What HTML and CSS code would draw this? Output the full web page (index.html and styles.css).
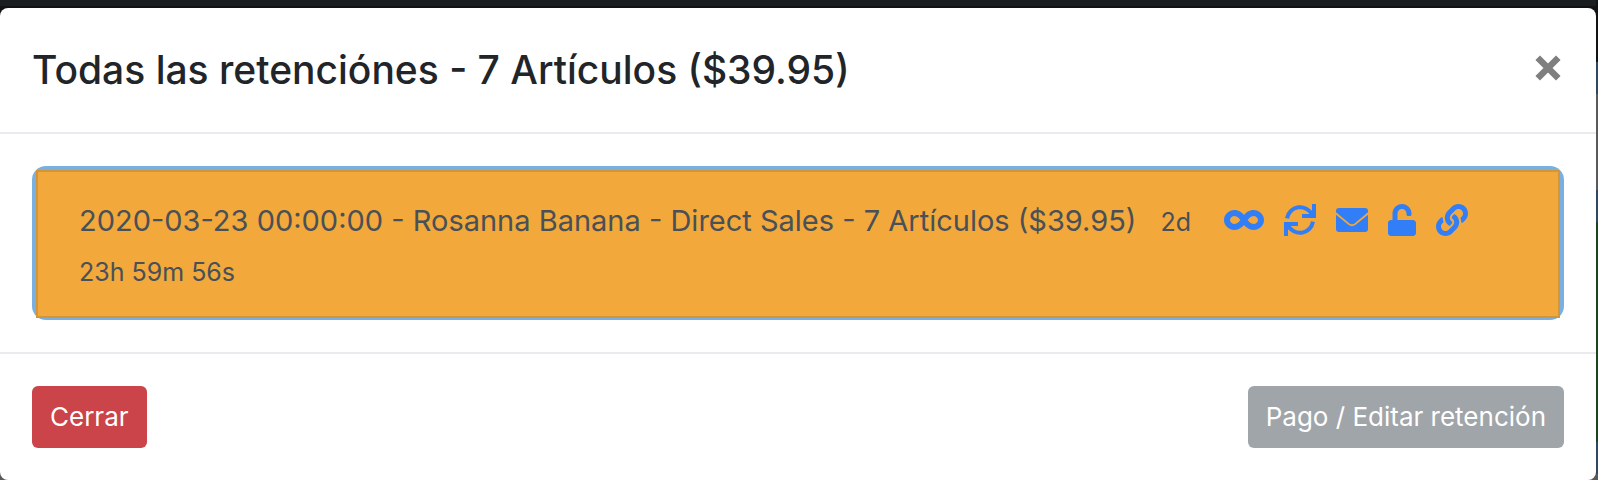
FILE: index.html
```html
<!DOCTYPE html>
<html lang="es">
<head>
<meta charset="utf-8">
<title>Todas las retenciónes</title>
<link rel="stylesheet" href="styles.css">
</head>
<body>
<main class="modal" role="dialog" aria-labelledby="modal-title">
  <header class="modal-header">
    <h1 class="modal-title" id="modal-title">Todas las retenciónes - 7 Artículos ($39.95)</h1>
    <button class="close" type="button" aria-label="Cerrar ventana">
      <svg class="close-icon" viewBox="0 0 24 24"><path d="M2.500 2.500l19 19M21.500 2.500l-19 19" fill="none" stroke="currentColor" stroke-width="6"/></svg>
    </button>
  </header>
  <section class="modal-body">
    <div class="hold-frame">
      <article class="hold">
        <div class="hold-text">2020-03-23 00:00:00 - Rosanna Banana - Direct Sales - 7 Artículos ($39.95) <small class="countdown">2d 23h 59m 56s</small></div>
        <nav class="actions" aria-label="Acciones">
          <a href="#" aria-label="Sin límite"><svg class="icon icon-wide" viewBox="0 0 640 512"><path d="M471.1 96C405 96 353.3 137.3 320 174.6 286.7 137.3 235 96 168.9 96 75.8 96 0 167.8 0 256s75.8 160 168.9 160c66.1 0 117.8-41.3 151.1-78.6 33.3 37.3 85 78.6 151.1 78.6 93.1 0 168.9-71.8 168.9-160S564.2 96 471.1 96zM168.9 320c-40.2 0-72.9-28.7-72.9-64s32.7-64 72.9-64c38.2 0 73.4 36.1 94 64-20.4 27.6-55.9 64-94 64zm302.2 0c-38.2 0-73.4-36.1-94-64 20.4-27.6 55.9-64 94-64 40.2 0 72.9 28.7 72.9 64s-32.7 64-72.9 64z"/></svg></a>
          <a href="#" aria-label="Renovar"><svg class="icon" viewBox="0 0 32 32"><path d="M3 14.3A13.3 13.3 0 0 1 28 10.500M30 0V12H18M29 17.7A13.3 13.3 0 0 1 4 21.500M2 32V20H14" fill="none" stroke="currentColor" stroke-width="4"/></svg></a>
          <a href="#" aria-label="Enviar correo"><svg class="icon" viewBox="0 0 32 32"><path d="M3 4H29A3 3 0 0 1 32 7V8.300L18.500 19.500Q16 21.200 13.500 19.500L0 8.300V7A3 3 0 0 1 3 4zM0 10.800L12.700 21.100Q16 23.300 19.300 21.100L32 10.800V25A3 3 0 0 1 29 28H3A3 3 0 0 1 0 25z"/></svg></a>
          <a href="#" aria-label="Desbloquear"><svg class="icon icon-narrow" viewBox="0 0 448 512"><path d="M400 256H152V152.900c0-39.600 31.700-72.500 71.300-72.900 40-.4 72.700 32.100 72.700 72v16c0 13.300 10.700 24 24 24h32c13.300 0 24-10.700 24-24v-16C376 68 307.500-.3 223.500 0 139.500.3 72 69.500 72 153.500V256H48c-26.500 0-48 21.500-48 48v160c0 26.500 21.500 48 48 48h352c26.500 0 48-21.500 48-48V304c0-26.500-21.500-48-48-48z"/></svg></a>
          <a href="#" aria-label="Enlace"><svg class="icon" viewBox="0 0 512 512"><path d="M326.612 185.391c59.747 59.809 58.927 155.698.36 214.590-.11.12-.24.25-.36.37l-67.200 67.200c-59.270 59.270-155.699 59.262-214.960 0-59.270-59.260-59.270-155.700 0-214.960l37.106-37.106c9.840-9.840 26.786-3.300 27.294 10.606.648 17.722 3.826 35.527 9.690 52.721 1.986 5.822.567 12.262-3.783 16.612l-13.087 13.087c-28.026 28.026-28.905 73.660-1.155 101.960 28.024 28.579 74.086 28.749 102.325.51l67.200-67.190c28.191-28.191 28.073-73.757 0-101.830-3.701-3.694-7.429-6.564-10.341-8.569a16.037 16.037 0 0 1-6.947-12.606c-.396-10.567 3.348-21.456 11.698-29.806l21.054-21.055c5.521-5.521 14.182-6.199 20.584-1.731a152.482 152.482 0 0 1 20.522 17.197zM467.547 44.449c-59.261-59.262-155.690-59.270-214.960 0l-67.200 67.200c-.12.12-.25.25-.36.37-58.566 58.892-59.387 154.781.36 214.590a152.454 152.454 0 0 0 20.521 17.196c6.402 4.468 15.064 3.789 20.584-1.731l21.054-21.055c8.350-8.350 12.094-19.239 11.698-29.806a16.037 16.037 0 0 0-6.947-12.606c-2.912-2.005-6.640-4.875-10.341-8.569-28.073-28.073-28.191-73.639 0-101.830l67.200-67.190c28.239-28.239 74.300-28.069 102.325.51 27.750 28.300 26.872 73.934-1.155 101.960l-13.087 13.087c-4.350 4.350-5.769 10.790-3.783 16.612 5.864 17.194 9.042 34.999 9.690 52.721.509 13.906 17.454 20.446 27.294 10.606l37.106-37.106c59.271-59.259 59.271-155.699.001-214.959z"/></svg></a>
        </nav>
      </article>
    </div>
  </section>
  <footer class="modal-footer">
    <button class="btn btn-danger" type="button">Cerrar</button>
    <button class="btn btn-muted" type="button">Pago / Editar retención</button>
  </footer>
</main>
</body>
</html>
```
FILE: styles.css
```css
* { box-sizing: border-box; }
body {
  margin: 0;
  padding: 8px 2px 0 0;
  min-height: 100vh;
  font-family: Inter, "Liberation Sans", sans-serif;
  color: #212529;
  background:
    linear-gradient(#101214 0 62px, #2d4860 62px 94px, #595959 94px 190px, #2d4860 190px 222px, #1b441f 222px 442px, #2d4860 442px 474px, #595959 474px) right 8px / 2px 100% no-repeat,
    linear-gradient(#1a1e21 0 6px, #101214 6px 62px, #595959 62px);
  background-position: right top, left top;
}
.modal { background: #fff; border-radius: 8px; }
.modal-header {
  display: flex;
  justify-content: space-between;
  align-items: flex-start;
  padding: 32px;
  border-bottom: 2px solid #e9ebef;
}
.modal-title { margin: 0; font-size: 39px; font-weight: 500; line-height: 60px; }
.close { display: flex; padding: 15px 3px; border: 0; background: none; color: #7f7f7f; }
.close-icon { width: 26px; height: 26px; }
.modal-body { padding: 32px; }
.hold-frame { padding: 4px 4px 2px; border-radius: 14px; background: #7ab0df; }
.hold {
  display: flex;
  align-items: flex-start;
  gap: 24px;
  padding: 24px 90px 20px 41px;
  border: 2px solid #d29638;
  background: #f2a83b;
  color: #495057;
}
.hold-text { flex: 1; font-size: 29px; line-height: 50px; }
.countdown { margin-left: 16px; font-size: 25px; line-height: 1; }
.actions { display: flex; gap: 20px; padding-top: 8px; }
.actions a { display: flex; color: #327ef7; }
.icon { width: 32px; height: 32px; fill: currentColor; }
.icon-wide { width: 40px; }
.icon-narrow { width: 28px; }
.modal-footer {
  display: flex;
  justify-content: space-between;
  padding: 32px;
  border-top: 2px solid #e9ebef;
}
.btn {
  padding: 10px 18px;
  border: 0;
  border-radius: 6px;
  color: #fff;
  font-family: inherit;
  font-size: 26px;
  line-height: 42px;
}
.btn-danger { background: #cb444a; }
.btn-muted { background: #a0a5a9; }
```
